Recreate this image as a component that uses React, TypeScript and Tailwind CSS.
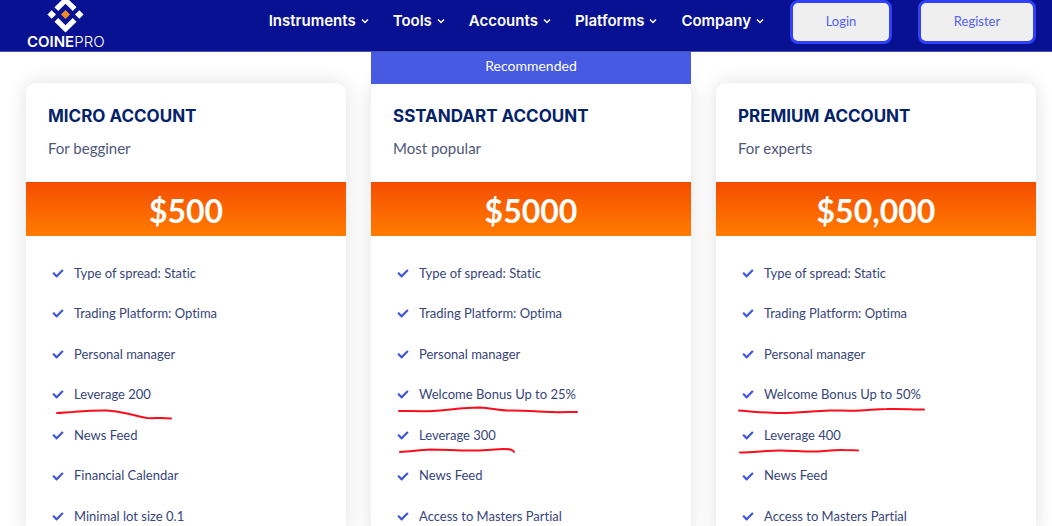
import React from 'react'
import { FaCheck } from 'react-icons/fa'

type Feature = {
  text: string
  // hand drawn marker line under the feature
  mark?: string
}

type Plan = {
  name: string
  note: string
  price: string
  recommended?: boolean
  features: Feature[]
}

const menu = ['Instruments', 'Tools', 'Accounts', 'Platforms', 'Company']

const plans: Plan[] = [
  {
    name: 'MICRO ACCOUNT',
    note: 'For begginer',
    price: '$500',
    features: [
      { text: 'Type of spread: Static' },
      { text: 'Trading Platform: Optima' },
      { text: 'Personal manager' },
      { text: 'Leverage 200', mark: 'M5 38 C10 38 16 37 21 37 C33 36 44 35 55 35.5 C62 36 68 37 75 38.5 C82 40 88 42 95 43 C102 43.5 111 42.5 119 43.5' },
      { text: 'News Feed' },
      { text: 'Financial Calendar' },
      { text: 'Minimal lot size 0.1' },
    ],
  },
  {
    name: 'SSTANDART ACCOUNT',
    note: 'Most popular',
    price: '$5000',
    recommended: true,
    features: [
      { text: 'Type of spread: Static' },
      { text: 'Trading Platform: Optima' },
      { text: 'Personal manager' },
      { text: 'Welcome Bonus Up to 25%', mark: 'M2 36 C14 36 24 36.5 36 36 C52 35 66 32.5 83 32.5 C94 33 102 35.5 113 35.5 C128 35.5 142 36.5 156 37 C164 37.5 172 37 180 37' },
      { text: 'Leverage 300', mark: 'M3 37 C13 36.5 23 35 33 34.5 C49 34.5 64 36 80 35.5 C90 35.5 98 34 107 34 C112 34 116 34 117 37' },
      { text: 'News Feed' },
      { text: 'Access to Masters Partial' },
    ],
  },
  {
    name: 'PREMIUM ACCOUNT',
    note: 'For experts',
    price: '$50,000',
    features: [
      { text: 'Type of spread: Static' },
      { text: 'Trading Platform: Optima' },
      { text: 'Personal manager' },
      { text: 'Welcome Bonus Up to 50%', mark: 'M-3 35.5 C10 36.5 24 38 38 38 C56 38 71 36 88 35.5 C98 35.5 108 36 118 35.5 C128 35 136 34 145 34 C158 33.5 170 34.5 182 34.5' },
      { text: 'Leverage 400', mark: 'M-2 37.5 C11 37.5 25 35.5 38 35.5 C51 35.5 62 37 75 36.5 C85 36 93 34.5 102 35 C107 35 112 35 116 35.5' },
      { text: 'News Feed' },
      { text: 'Access to Masters Partial' },
    ],
  },
]

function Logo() {
  return (
    <a href="#" className="flex flex-col items-center text-white">
      <svg className="h-[37px] w-[37px]" viewBox="0 0 37 37" fill="currentColor">
        <path d="M18.5 0.5 L29.5 11.3 L25.8 15 L18.5 7.8 L11.2 15 L7.5 11.3 Z" />
        <path d="M18.5 36.5 L29.5 25.7 L25.8 22 L18.5 29.2 L11.2 22 L7.5 25.7 Z" />
        <path d="M4.7 14.2 L9 18.5 L4.7 22.8 L0.4 18.5 Z" />
        <path d="M32.3 14.2 L36.6 18.5 L32.3 22.8 L28 18.5 Z" />
        <path d="M18.5 14 L23 18.5 L18.5 23 L14 18.5 Z" fill="#f08a24" />
      </svg>
      <span className="text-[15px] leading-[18px]">
        <span className="font-semibold">COINE</span>
        <span className="font-light">PRO</span>
      </span>
    </a>
  )
}

function Navbar() {
  return (
    <header className="flex h-[52px] justify-between overflow-hidden border-b border-[#4a50b4] bg-[#081192] pr-4 pl-[27px] font-[Inter,sans-serif]">
      <div className="flex items-end">
        <Logo />
      </div>
      <div className="flex items-start gap-[26px]">
        <nav className="flex h-[42px] items-center gap-6">
          {menu.map((item) => (
            <a key={item} href="#" className="flex items-center gap-[5px] text-[15px] font-semibold text-white">
              {item}
              <svg className="h-2 w-2" viewBox="0 0 8 8" fill="none" stroke="currentColor" strokeWidth="1.5">
                <path d="M1 2.5 L4 5.5 L7 2.5" />
              </svg>
            </a>
          ))}
        </nav>
        <button className="h-11 w-[102px] rounded-lg border-[3px] border-[#3140fb] bg-[#efefef] font-[Lato,sans-serif] text-[13px] text-[#5560f0]">
          Login
        </button>
        <button className="h-11 w-[118px] rounded-lg border-[3px] border-[#3140fb] bg-[#efefef] font-[Lato,sans-serif] text-[13px] text-[#5560f0]">
          Register
        </button>
      </div>
    </header>
  )
}

function PlanCard({ plan }: { plan: Plan }) {
  return (
    <div className="flex flex-col">
      <div className="relative z-10 h-[31px]">
        {plan.recommended && (
          <div className="h-8 bg-[#465ae2] text-center text-[14px] leading-7 text-white">Recommended</div>
        )}
      </div>
      <section className="rounded-[10px] bg-white shadow-[0_0_20px_rgba(0,0,0,0.12)]">
        <div className="h-[99px] px-[22px] pt-[21px]">
          <h2 className="font-[Inter,sans-serif] text-[17px] leading-6 font-bold text-[#04226a]">{plan.name}</h2>
          <p className="mt-2 text-[15px] leading-6 text-[#505878]">{plan.note}</p>
        </div>
        <div className="h-[54px] bg-linear-to-b from-[#f54c00] to-[#ff7b00] text-center text-[32px] leading-[58px] font-bold text-white">
          {plan.price}
        </div>
        <ul className="mt-[17px] grid h-[284px] grid-rows-7 px-[26px]">
          {plan.features.map((feature) => (
            <li key={feature.text} className="relative flex items-center gap-[10px] text-[13px] text-[#36457a]">
              <FaCheck className="h-[11px] w-3 text-[#3f55dc]" />
              {feature.text}
              {feature.mark && (
                <svg className="absolute top-0 left-0 h-10 w-[190px] overflow-visible" fill="none" stroke="#fb0d1b" strokeWidth="2" strokeLinecap="round">
                  <path d={feature.mark} />
                </svg>
              )}
            </li>
          ))}
        </ul>
      </section>
    </div>
  )
}

const App = () => {
  return (
    <div className="overflow-hidden bg-white font-[Lato,sans-serif] [font-variant-ligatures:none]">
      <Navbar />
      <main className="grid grid-cols-3 gap-[25px] pr-4 pl-[26px]">
        {plans.map((plan) => (
          <PlanCard key={plan.name} plan={plan} />
        ))}
      </main>
    </div>
  )
}

export default App
